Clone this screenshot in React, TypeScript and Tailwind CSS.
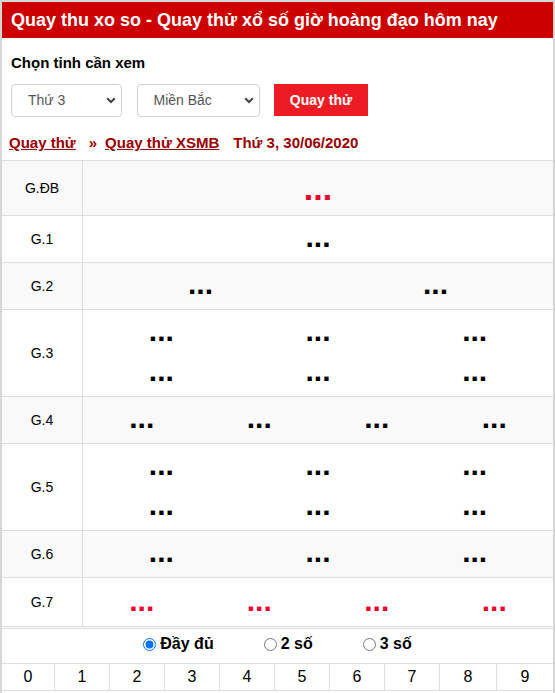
import { ReactNode } from "react";

type PrizeRow = {
  label: string;
  cols: 1 | 2 | 3 | 4;
  lines: 1 | 2;
  kind?: "special" | "last";
};

const prizeRows: PrizeRow[] = [
  { label: "G.ĐB", cols: 1, lines: 1, kind: "special" },
  { label: "G.1", cols: 1, lines: 1 },
  { label: "G.2", cols: 2, lines: 1 },
  { label: "G.3", cols: 3, lines: 2 },
  { label: "G.4", cols: 4, lines: 1 },
  { label: "G.5", cols: 3, lines: 2 },
  { label: "G.6", cols: 3, lines: 1 },
  { label: "G.7", cols: 4, lines: 1, kind: "last" },
];

const colClass = {
  1: "grid-cols-1",
  2: "grid-cols-2",
  3: "grid-cols-3",
  4: "grid-cols-4",
};

function Chevron() {
  return (
    <svg width="10" height="7" viewBox="0 0 10 7" aria-hidden>
      <path d="M1.2 1.3 L5 5 L8.8 1.3" fill="none" stroke="#444" strokeWidth="2" />
    </svg>
  );
}

function FakeSelect({ value, width }: { value: string; width: string }) {
  return (
    <div
      className={`${width} flex h-[33px] items-center justify-between rounded-[4px] border border-[#cfcfcf] pl-[16px] pr-[5px] text-[14px] text-[#555]`}
    >
      <span>{value}</span>
      <Chevron />
    </div>
  );
}

function Dots({ row }: { row: PrizeRow }) {
  const lineClass =
    row.kind === "special"
      ? "h-[48px] leading-[48px] text-[34px] text-[#f2002e]"
      : row.kind === "last"
        ? "h-[40px] leading-[40px] text-[30px] text-[#f2002e]"
        : "h-[40px] leading-[40px] text-[30px] text-black";
  const padClass =
    row.kind === "special"
      ? "pt-[3px] pb-[3px]"
      : row.kind === "last"
        ? "pt-[3px] pb-[5px]"
        : "pt-[1px] pb-[5px]";

  const cells: ReactNode[] = [];
  for (let l = 0; l < row.lines; l++) {
    for (let c = 0; c < row.cols; c++) {
      cells.push(
        <div key={`${l}-${c}`} className={`${lineClass} text-center font-bold`}>
          ...
        </div>,
      );
    }
  }

  return <div className={`grid ${colClass[row.cols]} ${padClass}`}>{cells}</div>;
}

export default function App() {
  return (
    <div className="w-[555px] bg-white font-['Liberation_Sans',Arial,sans-serif] text-black">
      <div className="border-x-2 border-t-2 border-[#d6d6d6]">
        <header className="flex h-[36px] items-center bg-[#cc0000] pl-[9px] text-[18px] font-bold text-white">
          Quay thu xo so - Quay thử xổ số giờ hoàng đạo hôm nay
        </header>

        <section className="pl-[9px] pt-[16px]">
          <p className="text-[15px] font-bold leading-[18px]">Chọn tỉnh cần xem</p>
          <div className="mt-[12px] flex items-start gap-[14.5px]">
            <FakeSelect value="Thứ 3" width="w-[111px]" />
            <FakeSelect value="Miền Bắc" width="w-[123px]" />
            <button className="h-[32px] w-[94px] bg-[#ed1c24] text-[14px] font-bold text-white">
              Quay thử
            </button>
          </div>
          <nav className="-ml-[2px] mt-[16px] flex items-center text-[15px] font-bold leading-[20px] text-[#990000]">
            <a className="underline">Quay thử</a>
            <span className="ml-[13px] mr-[8px]">»</span>
            <a className="underline">Quay thử XSMB</a>
            <span className="ml-[14px]">Thứ 3, 30/06/2020</span>
          </nav>
        </section>

        <div className="mt-[7px] border-t border-[#ddd]">
          {prizeRows.map((row, i) => (
            <div
              key={row.label}
              className={`flex border-b border-[#ddd] ${i % 2 === 0 ? "bg-[#f9f9f9]" : "bg-white"}`}
            >
              <div className="flex w-[81px] shrink-0 items-center justify-center border-r border-[#ddd] text-[14px]">
                {row.label}
              </div>
              <div className="flex-1">
                <Dots row={row} />
              </div>
            </div>
          ))}
        </div>

        <div className="mt-[1px] border-t border-[#ddd]">
          <div className="flex h-[34px] items-center justify-center gap-[50px] pb-[4px] text-[16px] font-bold">
            <label className="flex items-center">
              <input type="radio" name="mode" defaultChecked className="mr-[4px] h-[13px] w-[13px]" />
              Đầy đủ
            </label>
            <label className="flex items-center">
              <input type="radio" name="mode" className="mr-[4px] h-[13px] w-[13px]" />
              2 số
            </label>
            <label className="flex items-center">
              <input type="radio" name="mode" className="mr-[4px] h-[13px] w-[13px]" />
              3 số
            </label>
          </div>
          <div className="grid h-[28px] grid-cols-[53px_repeat(7,55px)_57px_1fr] border-y border-[#ddd] text-[16px]">
            {[0, 1, 2, 3, 4, 5, 6, 7, 8, 9].map((d) => (
              <div
                key={d}
                className={`flex items-center justify-center ${d < 9 ? "border-r border-[#ddd]" : ""}`}
              >
                {d}
              </div>
            ))}
          </div>
          <div className="h-[3px]" />
        </div>
      </div>
    </div>
  );
}
